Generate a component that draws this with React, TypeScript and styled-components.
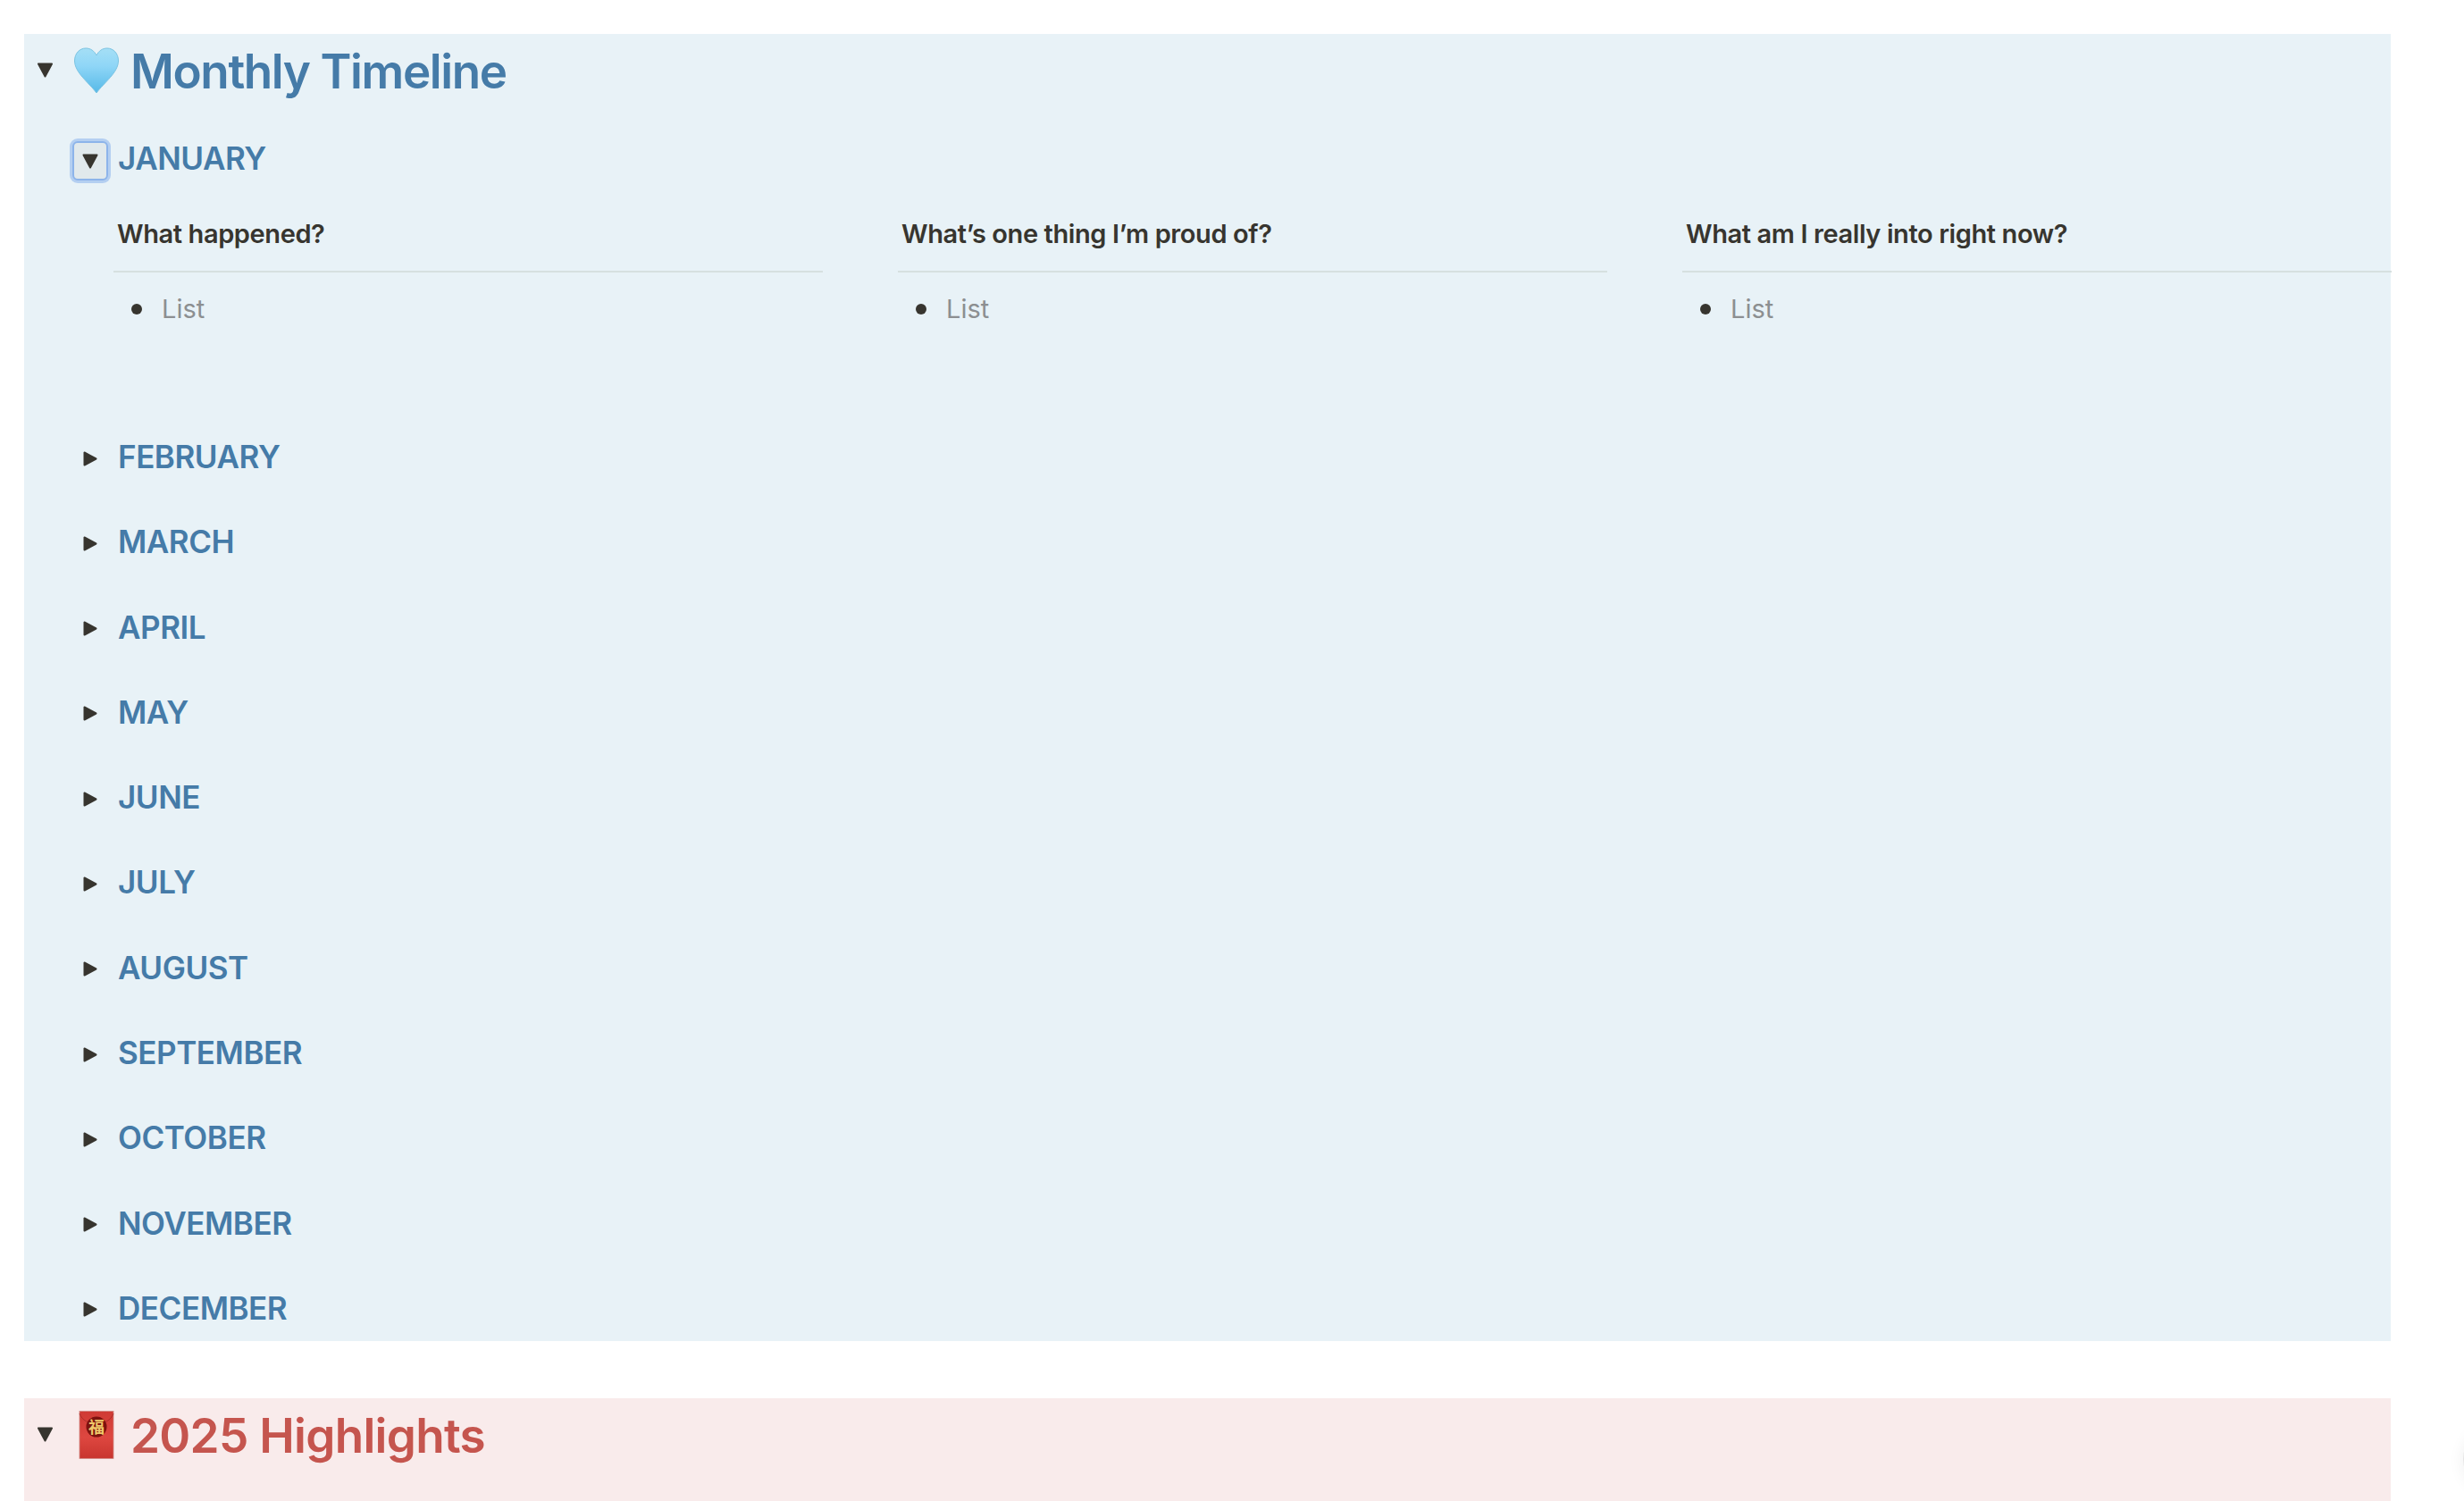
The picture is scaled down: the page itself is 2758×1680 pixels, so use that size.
import React from 'react';
import styled, { createGlobalStyle } from 'styled-components';

const Global = createGlobalStyle`
  html, body {
    margin: 0;
    padding: 0;
    background: #fff;
    height: 1680px;
    overflow: hidden;
  }
  body {
    font-family: Inter, "Liberation Sans", sans-serif;
    color: #37352f;
  }
`;

const Page = styled.div`
  position: relative;
  width: 2758px;
  height: 1680px;
  overflow: hidden;
  padding: 38px 82px 0 27px;
  box-sizing: border-box;
  display: flex;
  flex-direction: column;
  gap: 64px;
`;

const Panel = styled.section<{ $tone: 'blue' | 'red' }>`
  background: ${p => (p.$tone === 'blue' ? '#e8f2f7' : '#f9ebeb')};
  color: ${p => (p.$tone === 'blue' ? '#457ba8' : '#c5554e')};
  height: ${p => (p.$tone === 'blue' ? '1463px' : '115px')};
  flex-shrink: 0;
`;

const TitleRow = styled.div`
  display: flex;
  align-items: center;
  height: 84px;
  padding-left: 14px;
  margin-bottom: 25px;
`;

const TitleCaret = styled.svg`
  width: 19px;
  height: 17px;
  margin: 0 23px 3px 0;
  flex-shrink: 0;
`;

const Emoji = styled.svg`
  width: 50px;
  height: 54px;
  margin-right: 13px;
  flex-shrink: 0;
  overflow: visible;
`;

const Title = styled.h1<{ $tight?: boolean }>`
  margin: 0;
  font-size: 53px;
  font-weight: 620;
  letter-spacing: ${p => (p.$tight ? '-1.4px' : '-0.7px')};
  line-height: 84px;
`;

const MonthRow = styled.div`
  display: flex;
  align-items: center;
  height: 60px;
  padding-left: 51px;
`;

const ToggleSlot = styled.div<{ $focused?: boolean }>`
  width: ${p => (p.$focused ? '40px' : '46px')};
  height: ${p => (p.$focused ? '44px' : '50px')};
  margin: ${p => (p.$focused ? '6px 11px 0 3px' : '4px 8px 0 0')};
  flex-shrink: 0;
  box-sizing: border-box;
  display: flex;
  align-items: center;
  justify-content: center;
  border-radius: 6px;
  background: ${p => (p.$focused ? '#e1e9ec' : 'transparent')};
  border: ${p => (p.$focused ? '2px solid #8db4ea' : 'none')};
  box-shadow: ${p => (p.$focused ? '0 0 0 3px #b4cff1' : 'none')};
`;

const Caret = styled.svg`
  width: 18px;
  height: 17px;
`;

const MonthName = styled.h2`
  margin: 0;
  font-size: 35px;
  font-weight: 620;
  letter-spacing: -0.45px;
  line-height: 60px;
`;

const Months = styled.div`
  display: flex;
  flex-direction: column;
  gap: 35.3px;
`;

const JanuaryBlock = styled.div`
  display: flex;
  flex-direction: column;
`;

const Columns = styled.div`
  display: grid;
  grid-template-columns: repeat(3, 794px);
  column-gap: 84px;
  padding-left: 100px;
  height: 274px;
  box-sizing: border-box;
  color: #37352f;
`;

const Column = styled.div`
  display: flex;
  flex-direction: column;
`;

const ColumnHead = styled.div`
  height: 98px;
  padding: 34px 0 0 4px;
  box-sizing: border-box;
  border-bottom: 2px solid #d6e0e0;
  font-size: 29px;
  font-weight: 620;
  letter-spacing: -0.4px;
  line-height: 42px;
`;

const BulletList = styled.ul`
  margin: 20px 0 0;
  padding: 0 0 0 20px;
  list-style: none;
  font-size: 29px;
  line-height: 42px;
`;

const BulletItem = styled.li`
  display: flex;
  align-items: center;
  color: #8c8f91;
  &::before {
    content: '';
    width: 12px;
    height: 12px;
    border-radius: 50%;
    background: #37352f;
    margin-right: 22px;
    flex-shrink: 0;
  }
`;

const HelpShadow = styled.div`
  position: absolute;
  left: 2757px;
  top: 1596px;
  width: 72px;
  height: 72px;
  border-radius: 50%;
  background: #fff;
  border: 1px solid #e4e4e4;
  box-shadow: 0 2px 18px rgba(0, 0, 0, 0.07);
`;

const Down = ({ as: Comp }: { as: typeof Caret | typeof TitleCaret }) => (
  <Comp viewBox="0 0 18 17">
    <path d="M1.5 1.5h15L9 15.5z" fill="#37352f" stroke="#37352f" strokeWidth="2" strokeLinejoin="round" />
  </Comp>
);

const Right = () => (
  <Caret viewBox="0 0 18 17">
    <path d="M2.5 1.5v14L15.5 8.5z" fill="#37352f" stroke="#37352f" strokeWidth="2" strokeLinejoin="round" />
  </Caret>
);

const Heart = () => (
  <Emoji viewBox="0 1 50 54">
    <defs>
      <linearGradient id="heartFill" x1="0" y1="0" x2="0" y2="1">
        <stop offset="0" stopColor="#a5dff6" />
        <stop offset="0.4" stopColor="#8fd6f7" />
        <stop offset="1" stopColor="#56b9e8" />
      </linearGradient>
    </defs>
    <path
      d="M25 52C16 40 .5 29 .5 16 .5 8 6 2 13 2c5.500 0 9.500 3 12 8 2.500-5 6.500-8 12-8 7 0 12.500 6 12.500 14 0 13-15.500 24-24.500 36z"
      fill="url(#heartFill)"
      stroke="#7cc4e2"
      strokeWidth="1"
    />
  </Emoji>
);

const Envelope = () => (
  <Emoji viewBox="0 1 50 54">
    <defs>
      <linearGradient id="envFill" x1="0" y1="0" x2="0" y2="1">
        <stop offset="0" stopColor="#cf3a34" />
        <stop offset="0.55" stopColor="#de4740" />
        <stop offset="1" stopColor="#c8352f" />
      </linearGradient>
    </defs>
    <rect x="6" y="0.500" width="38" height="53" fill="url(#envFill)" stroke="#d08a85" strokeWidth="0.800" />
    <path d="M6 3c3 8 10 11 19 12 9-1 16-4 19-12" fill="none" stroke="#a52a26" strokeWidth="0.800" />
    <circle cx="25" cy="18" r="11.500" fill="#7d120e" />
    <text
      x="25"
      y="24.500"
      textAnchor="middle"
      fontSize="18"
      fontWeight="700"
      fill="#efc86a"
      fontFamily='"Noto Sans CJK TC", sans-serif'
    >
      福
    </text>
  </Emoji>
);

const QUESTIONS = ['What happened?', 'What’s one thing I’m proud of?', 'What am I really into right now?'];
const MONTHS = [
  'FEBRUARY',
  'MARCH',
  'APRIL',
  'MAY',
  'JUNE',
  'JULY',
  'AUGUST',
  'SEPTEMBER',
  'OCTOBER',
  'NOVEMBER',
  'DECEMBER',
];

export default function App() {
  return (
    <Page>
      <Global />
      <Panel $tone="blue">
        <TitleRow>
          <Down as={TitleCaret} />
          <Heart />
          <Title $tight>Monthly Timeline</Title>
        </TitleRow>
        <JanuaryBlock>
          <MonthRow>
            <ToggleSlot $focused>
              <Down as={Caret} />
            </ToggleSlot>
            <MonthName>JANUARY</MonthName>
          </MonthRow>
          <Columns>
            {QUESTIONS.map(q => (
              <Column key={q}>
                <ColumnHead>{q}</ColumnHead>
                <BulletList>
                  <BulletItem>List</BulletItem>
                </BulletList>
              </Column>
            ))}
          </Columns>
        </JanuaryBlock>
        <Months>
          {MONTHS.map(m => (
            <MonthRow key={m}>
              <ToggleSlot>
                <Right />
              </ToggleSlot>
              <MonthName>{m}</MonthName>
            </MonthRow>
          ))}
        </Months>
      </Panel>
      <Panel $tone="red">
        <TitleRow>
          <Down as={TitleCaret} />
          <Envelope />
          <Title>2025 Highlights</Title>
        </TitleRow>
      </Panel>
      <HelpShadow />
    </Page>
  );
}
